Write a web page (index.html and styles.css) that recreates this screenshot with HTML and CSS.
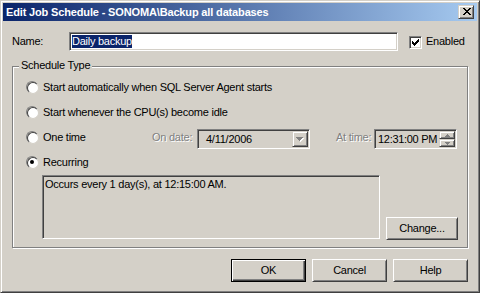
FILE: index.html
```html
<!DOCTYPE html>
<html>
<head>
<meta charset="utf-8">
<title>Edit Job Schedule</title>
<link rel="stylesheet" href="styles.css">
</head>
<body>
<div class="window">
  <div class="titlebar">
    <span class="title">Edit Job Schedule - SONOMA\Backup all databases</span>
    <span class="close raised"><svg width="8" height="7" viewBox="0 0 8 7" shape-rendering="crispEdges"><path fill="#000" d="M0 0h2v1h-2zM6 0h2v1h-2zM1 1h2v1h-2zM5 1h2v1h-2zM2 2h4v1h-4zM3 3h2v1h-2zM2 4h4v1h-4zM1 5h2v1h-2zM5 5h2v1h-2zM0 6h2v1h-2zM6 6h2v1h-2z"/></svg></span>
  </div>
  <div class="content">
    <div class="name-row">
      <span class="name-label">Name:</span>
      <div class="textbox"><span class="sel">Daily backup</span></div>
      <span class="checkbox"><svg width="7" height="7" viewBox="0 0 7 7" shape-rendering="crispEdges"><path fill="#000" d="M6 0h1v1h-1zM5 1h2v1h-2zM0 2h1v1h-1zM4 2h3v1h-3zM0 3h2v1h-2zM3 3h3v1h-3zM0 4h5v1h-5zM1 5h3v1h-3zM2 6h1v1h-1z"/></svg></span>
      <span class="check-label">Enabled</span>
    </div>

    <div class="group">
      <span class="legend">Schedule Type</span>
      <div class="opt"><span class="radio"></span><span class="opt-text">Start automatically when SQL Server Agent starts</span></div>
      <div class="opt"><span class="radio"></span><span class="opt-text">Start whenever the CPU(s) become idle</span></div>
      <div class="opt">
        <div class="opt-lead"><span class="radio"></span><span class="opt-text">One time</span></div>
        <span class="disabled date-label">On date:</span>
        <div class="combo">
          <span class="field-text">4/11/2006</span>
          <span class="dd-btn raised"><svg width="8" height="5" viewBox="0 0 8 5" shape-rendering="crispEdges"><path fill="#fff" d="M1 1h7v1h-7zM2 2h5v1h-5zM3 3h3v1h-3zM4 4h1v1h-1z"/><path fill="#808080" d="M0 0h7v1h-7zM1 1h5v1h-5zM2 2h3v1h-3zM3 3h1v1h-1z"/></svg></span>
        </div>
        <span class="disabled time-label">At time:</span>
        <div class="timebox">
          <span class="time-text">12:31:00 PM</span>
          <span class="spin">
            <span class="spin-btn raised"><svg width="5" height="3" viewBox="0 0 5 3" shape-rendering="crispEdges"><path fill="#808080" d="M2 0h1v1h-1zM1 1h3v1h-3zM0 2h5v1h-5z"/></svg></span>
            <span class="spin-btn raised"><svg width="5" height="3" viewBox="0 0 5 3" shape-rendering="crispEdges"><path fill="#808080" d="M0 0h5v1h-5zM1 1h3v1h-3zM2 2h1v1h-1z"/></svg></span>
          </span>
        </div>
      </div>
      <div class="opt"><span class="radio checked"></span><span class="opt-text">Recurring</span></div>
      <div class="rec-row">
        <div class="desc">Occurs every 1 day(s), at 12:15:00 AM.</div>
        <div class="btn change">Change...</div>
      </div>
    </div>

    <div class="buttons">
      <div class="btn default">OK</div>
      <div class="btn">Cancel</div>
      <div class="btn">Help</div>
    </div>
  </div>
</div>
</body>
</html>
```

FILE: styles.css
```css
* { box-sizing: border-box; }

html, body {
  margin: 0;
  padding: 0;
  background: #d4d0c8;
}

body {
  font-family: "Liberation Sans", Arial, sans-serif;
  font-size: 11px;
  letter-spacing: -0.25px;
  line-height: 13px;
  color: #000;
}

.window {
  width: 480px;
  height: 293px;
  background: #d4d0c8;
  border: 1px solid;
  border-color: #d4d0c8 #404040 #404040 #d4d0c8;
  box-shadow: inset 1px 1px 0 #fff, inset -1px -1px 0 #808080;
  padding: 2px;
}

.raised {
  border: 1px solid;
  border-color: #d4d0c8 #404040 #404040 #d4d0c8;
  box-shadow: inset 1px 1px 0 #fff, inset -1px -1px 0 #808080;
  background: #d4d0c8;
}

/* title bar */
.titlebar {
  height: 18px;
  display: flex;
  align-items: center;
  justify-content: space-between;
  background: linear-gradient(to right, #0a246a, #a6caf0);
  padding: 0 3px 0 3px;
}

.title {
  color: #fff;
  font-weight: bold;
  letter-spacing: -0.15px;
}

.close {
  width: 16px;
  height: 14px;
  display: flex;
  align-items: center;
  justify-content: center;
  padding: 0 0 1px 1px;
}

.close svg { display: block; }

/* content */
.content {
  padding: 0 9px;
}

.name-row {
  display: flex;
  align-items: center;
  margin-top: 11px;
  height: 19px;
}

.name-label {
  width: 57px;
  flex: none;
}

.textbox {
  width: 329px;
  height: 19px;
  flex: none;
  background: #fff;
  border: 1px solid;
  border-color: #808080 #fff #fff #808080;
  box-shadow: inset 1px 1px 0 #404040, inset -1px -1px 0 #d4d0c8;
  display: flex;
  align-items: center;
  padding-left: 2px;
}

.sel {
  background: #0a246a;
  color: #fff;
}

.checkbox {
  width: 13px;
  height: 13px;
  flex: none;
  margin-left: 11px;
  background: #fff;
  border: 1px solid;
  border-color: #808080 #fff #fff #808080;
  box-shadow: inset 1px 1px 0 #404040, inset -1px -1px 0 #d4d0c8;
  padding: 2px;
  margin-top: 1px;
}

.checkbox svg { display: block; }

.check-label {
  margin-left: 4px;
}

/* group box */
.group {
  position: relative;
  margin-top: 15px;
  height: 182px;
  border: 1px solid #808080;
  box-shadow: 1px 1px 0 #fff, inset 1px 1px 0 #fff;
  padding: 8px 0 7px 13px;
}

.legend {
  position: absolute;
  top: -8px;
  left: 6px;
  padding: 0 2px;
  background: #d4d0c8;
}

.opt {
  display: flex;
  align-items: flex-start;
  height: 25px;
}

.opt-lead {
  display: flex;
  align-items: flex-start;
  width: 126px;
  flex: none;
}

.radio {
  position: relative;
  width: 12px;
  height: 12px;
  flex: none;
  margin-top: 6px;
  border-radius: 50%;
  border: 1px solid;
  border-color: #808080 #fff #fff #808080;
}

.radio::before {
  content: "";
  position: absolute;
  left: 0;
  top: 0;
  width: 10px;
  height: 10px;
  border-radius: 50%;
  border: 1px solid;
  border-color: #404040 #d4d0c8 #d4d0c8 #404040;
  background: #fff;
}

.radio.checked::after {
  content: "";
  position: absolute;
  left: 3px;
  top: 3px;
  width: 4px;
  height: 4px;
  border-radius: 50%;
  background: #000;
}

.opt-text {
  margin-left: 5px;
  margin-top: 6px;
}

.disabled {
  color: #808080;
  text-shadow: 1px 1px 0 #fff;
  margin-top: 6px;
  flex: none;
}

.date-label { width: 45px; }

.time-label {
  width: 38px;
  margin-left: 26px;
}

.combo,
.timebox {
  height: 20px;
  margin-top: 4px;
  flex: none;
  display: flex;
  align-items: center;
  justify-content: space-between;
  border: 1px solid;
  border-color: #808080 #fff #fff #808080;
  box-shadow: inset 1px 1px 0 #404040, inset -1px -1px 0 #d4d0c8;
  padding: 1px;
  background: #d4d0c8;
}

.combo { width: 113px; }
.timebox { width: 83px; }

.field-text { padding-left: 7px; }
.time-text { padding-left: 2px; letter-spacing: -0.3px; }

.dd-btn {
  width: 16px;
  height: 16px;
  display: flex;
  align-items: center;
  justify-content: center;
}

.dd-btn svg { display: block; }

.spin {
  display: flex;
  flex-direction: column;
  width: 16px;
  height: 16px;
}

.spin-btn {
  width: 16px;
  height: 8px;
  display: flex;
  align-items: center;
  justify-content: center;
}

.spin-btn svg { display: block; }

.rec-row {
  display: flex;
  align-items: flex-start;
  margin-left: 16px;
}

.desc {
  width: 338px;
  height: 64px;
  flex: none;
  border: 1px solid;
  border-color: #808080 #fff #fff #808080;
  box-shadow: inset 1px 1px 0 #404040, inset -1px -1px 0 #d4d0c8;
  padding: 2px 2px;
}

.btn {
  width: 75px;
  height: 23px;
  flex: none;
  display: flex;
  align-items: center;
  justify-content: center;
  border: 1px solid;
  border-color: #fff #404040 #404040 #fff;
  box-shadow: inset 1px 1px 0 #d4d0c8, inset -1px -1px 0 #808080;
  background: #d4d0c8;
}

.btn.default {
  border-color: #000;
  box-shadow: inset 1px 1px 0 #fff, inset -1px -1px 0 #404040, inset -2px -2px 0 #808080;
}

.change {
  width: 72px;
  margin-left: 6px;
  margin-top: 42px;
}

.buttons {
  display: flex;
  justify-content: flex-end;
  gap: 6px;
  margin-top: 11px;
}
```
